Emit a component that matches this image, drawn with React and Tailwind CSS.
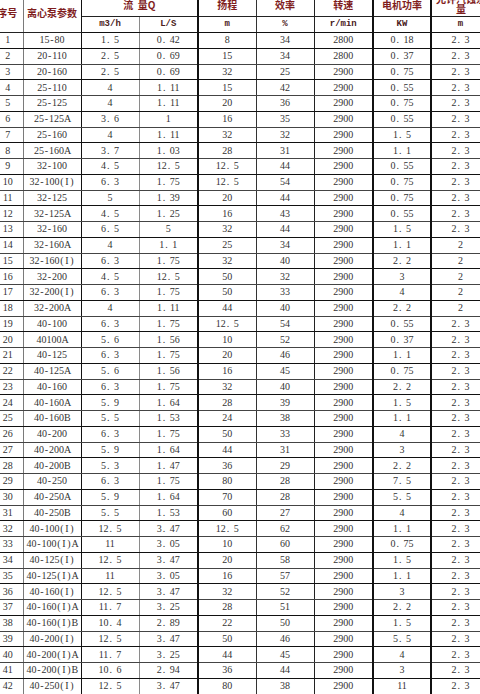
import React from "react";

const rows = [
  ["1", "15-80", "1.5", "0.42", "8", "34", "2800", "0.18", "2.3"],
  ["2", "20-110", "2.5", "0.69", "15", "34", "2800", "0.37", "2.3"],
  ["3", "20-160", "2.5", "0.69", "32", "25", "2900", "0.75", "2.3"],
  ["4", "25-110", "4", "1.11", "15", "42", "2900", "0.55", "2.3"],
  ["5", "25-125", "4", "1.11", "20", "36", "2900", "0.75", "2.3"],
  ["6", "25-125A", "3.6", "1", "16", "35", "2900", "0.55", "2.3"],
  ["7", "25-160", "4", "1.11", "32", "32", "2900", "1.5", "2.3"],
  ["8", "25-160A", "3.7", "1.03", "28", "31", "2900", "1.1", "2.3"],
  ["9", "32-100", "4.5", "12.5", "12.5", "44", "2900", "0.55", "2.3"],
  ["10", "32-100(I)", "6.3", "1.75", "12.5", "54", "2900", "0.75", "2.3"],
  ["11", "32-125", "5", "1.39", "20", "44", "2900", "0.75", "2.3"],
  ["12", "32-125A", "4.5", "1.25", "16", "43", "2900", "0.55", "2.3"],
  ["13", "32-160", "6.5", "5", "32", "44", "2900", "1.5", "2.3"],
  ["14", "32-160A", "4", "1.1", "25", "34", "2900", "1.1", "2"],
  ["15", "32-160(I)", "6.3", "1.75", "32", "40", "2900", "2.2", "2"],
  ["16", "32-200", "4.5", "12.5", "50", "32", "2900", "3", "2"],
  ["17", "32-200(I)", "6.3", "1.75", "50", "33", "2900", "4", "2"],
  ["18", "32-200A", "4", "1.11", "44", "40", "2900", "2.2", "2"],
  ["19", "40-100", "6.3", "1.75", "12.5", "54", "2900", "0.55", "2.3"],
  ["20", "40100A", "5.6", "1.56", "10", "52", "2900", "0.37", "2.3"],
  ["21", "40-125", "6.3", "1.75", "20", "46", "2900", "1.1", "2.3"],
  ["22", "40-125A", "5.6", "1.56", "16", "45", "2900", "0.75", "2.3"],
  ["23", "40-160", "6.3", "1.75", "32", "40", "2900", "2.2", "2.3"],
  ["24", "40-160A", "5.9", "1.64", "28", "39", "2900", "1.5", "2.3"],
  ["25", "40-160B", "5.5", "1.53", "24", "38", "2900", "1.1", "2.3"],
  ["26", "40-200", "6.3", "1.75", "50", "33", "2900", "4", "2.3"],
  ["27", "40-200A", "5.9", "1.64", "44", "31", "2900", "3", "2.3"],
  ["28", "40-200B", "5.3", "1.47", "36", "29", "2900", "2.2", "2.3"],
  ["29", "40-250", "6.3", "1.75", "80", "28", "2900", "7.5", "2.3"],
  ["30", "40-250A", "5.9", "1.64", "70", "28", "2900", "5.5", "2.3"],
  ["31", "40-250B", "5.5", "1.53", "60", "27", "2900", "4", "2.3"],
  ["32", "40-100(I)", "12.5", "3.47", "12.5", "62", "2900", "1.1", "2.3"],
  ["33", "40-100(I)A", "11", "3.05", "10", "60", "2900", "0.75", "2.3"],
  ["34", "40-125(I)", "12.5", "3.47", "20", "58", "2900", "1.5", "2.3"],
  ["35", "40-125(I)A", "11", "3.05", "16", "57", "2900", "1.1", "2.3"],
  ["36", "40-160(I)", "12.5", "3.47", "32", "52", "2900", "3", "2.3"],
  ["37", "40-160(I)A", "11.7", "3.25", "28", "51", "2900", "2.2", "2.3"],
  ["38", "40-160(I)B", "10.4", "2.89", "22", "50", "2900", "1.5", "2.3"],
  ["39", "40-200(I)", "12.5", "3.47", "50", "46", "2900", "5.5", "2.3"],
  ["40", "40-200(I)A", "11.7", "3.25", "44", "45", "2900", "4", "2.3"],
  ["41", "40-200(I)B", "10.6", "2.94", "36", "44", "2900", "3", "2.3"],
  ["42", "40-250(I)", "12.5", "3.47", "80", "38", "2900", "11", "2.3"],
];

// right border classes per column
const rb = [
  "border-r border-r-[#7a7a7a]",
  "border-r border-r-[#111]",
  "border-r border-r-[#8a8a8a]",
  "border-r-2 border-r-[#111]",
  "border-r border-r-[#333]",
  "border-r border-r-[#222]",
  "border-r-2 border-r-[#111]",
  "border-r-2 border-r-[#111]",
  "",
];

// Render half-width punctuation in fixed cells like the sheet's Song font
function Cell({ s }) {
  return (
    <>
      {s.split("").map((ch, k) => {
        if (ch === ".")
          return (
            <span key={k} className="inline-block w-[8px] pl-[1px] text-left">.</span>
          );
        if (ch === "-" || ch === "(" || ch === ")" || ch === "I")
          return (
            <span key={k} className="inline-block w-[5px] text-center">{ch}</span>
          );
        if (ch === "A" || ch === "B")
          return (
            <span key={k} className="inline-block w-[6px] text-left">{ch}</span>
          );
        return <React.Fragment key={k}>{ch}</React.Fragment>;
      })}
    </>
  );
}

const cjk = "font-['Noto_Sans_CJK_SC',sans-serif]";
const hd = `${cjk} font-bold text-[10px] leading-[12px] text-[#7f1d1d] text-center align-middle p-0 overflow-hidden whitespace-nowrap`;
const unit = "font-['Liberation_Mono',monospace] font-bold text-[9px] leading-[12px] text-[#4a2020] text-center align-middle p-0";

export default function App() {
  return (
    <div className="w-[480px] h-[694px] overflow-hidden bg-white">
      <table className="table-fixed border-collapse w-[497px] -ml-[8px] -mt-[7px]">
        <colgroup>
          <col className="w-[31px]" />
          <col className="w-[58px]" />
          <col className="w-[58px]" />
          <col className="w-[59px]" />
          <col className="w-[58px]" />
          <col className="w-[58px]" />
          <col className="w-[59px]" />
          <col className="w-[58px]" />
          <col className="w-[58px]" />
        </colgroup>
        <thead>
          <tr className="h-[23px]">
            <th rowSpan={2} className={`${hd} ${rb[0]} border-b border-b-[#222]`}>序号</th>
            <th rowSpan={2} className={`${hd} ${rb[1]} border-b border-b-[#222]`}>离心泵参数</th>
            <th colSpan={2} className={`${hd} ${rb[3]} border-b border-b-[#222] pt-[2px]`}>流&nbsp;&nbsp;量Q</th>
            <th className={`${hd} ${rb[4]} border-b border-b-[#222] pt-[2px]`}>扬程</th>
            <th className={`${hd} ${rb[5]} border-b border-b-[#222] pt-[2px]`}>效率</th>
            <th className={`${hd} ${rb[6]} border-b border-b-[#222] pt-[2px]`}>转速</th>
            <th className={`${hd} ${rb[7]} border-b border-b-[#222] pt-[2px]`}>电机功率</th>
            <th className={`${hd} border-b border-b-[#222] whitespace-normal`}>
              <div className="w-[58px] h-[20px] overflow-hidden leading-[10px]">允许汽蚀余<br />量</div>
            </th>
          </tr>
          <tr className="h-[16.5px]">
            <th className={`${unit} ${rb[2]} border-b border-b-[#111]`}>m3/h</th>
            <th className={`${unit} ${rb[3]} border-b border-b-[#111]`}>L/S</th>
            <th className={`${unit} ${rb[4]} border-b border-b-[#111]`}>m</th>
            <th className={`${unit} ${rb[5]} border-b border-b-[#111]`}>%</th>
            <th className={`${unit} ${rb[6]} border-b border-b-[#111]`}>r/min</th>
            <th className={`${unit} ${rb[7]} border-b border-b-[#111]`}>KW</th>
            <th className={`${unit} border-b border-b-[#111]`}>m</th>
          </tr>
        </thead>
        <tbody>
          {rows.map((r, i) => (
            <tr key={i} className="h-[15.75px]">
              {r.map((c, j) => (
                <td
                  key={j}
                  className={`${rb[j]} border-b ${i % 2 === 0 ? "border-b-[#111]" : "border-b-[#444]"} p-0 text-center align-middle whitespace-nowrap font-['Liberation_Serif',serif] text-[10px] leading-[14px] text-[#333] ${j === 0 ? "pl-[1px]" : ""}`}
                >
                  <Cell s={c} />
                </td>
              ))}
            </tr>
          ))}
        </tbody>
      </table>
    </div>
  );
}
